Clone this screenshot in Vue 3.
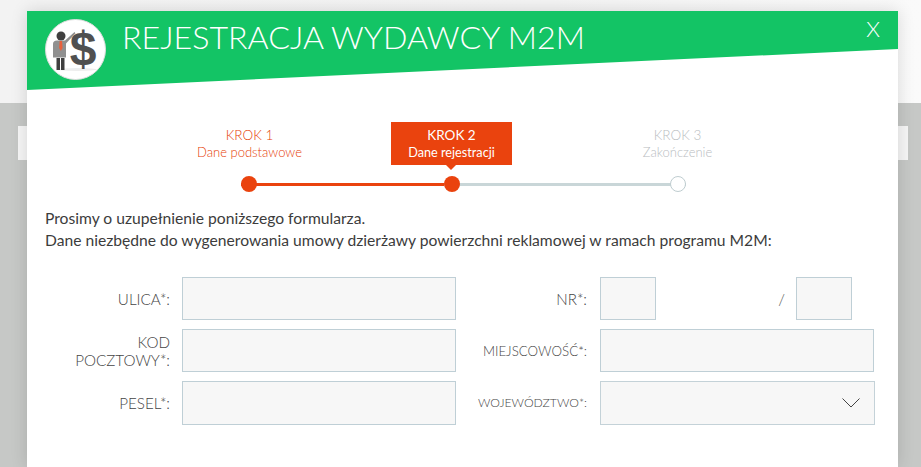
<script setup>
const steps = [
  { id: 1, title: 'KROK 1', sub: 'Dane podstawowe', state: 'done' },
  { id: 2, title: 'KROK 2', sub: 'Dane rejestracji', state: 'active' },
  { id: 3, title: 'KROK 3', sub: 'Zakończenie', state: 'todo' }
]
</script>

<template>
  <div class="backdrop">
    <div class="band"></div>
    <div class="under">
      <div class="strip"></div>
      <div class="strip"></div>
    </div>
  </div>

  <section class="modal">
    <header class="head">
      <div class="logo">
        <svg viewBox="0 0 61 61" width="61" height="61">
          <circle cx="30.5" cy="30.5" r="30" fill="#fff" stroke="#dcdcdc" stroke-width="1" />
          <ellipse cx="32" cy="50.500" rx="20" ry="1.500" fill="#eeeeee" />
          <circle cx="16" cy="17" r="4.500" fill="#3f3f3f" />
          <path d="M8 25q0-3.500 4-3.500h8l9.500-8.500 1 1.200-9.500 10.300v14H8z" fill="#909090" />
          <path d="M11.500 39h3.500v12h-3.500zM16 39h3.500v12H16z" fill="#3f3f3f" />
          <path d="M14.700 22h2.300l.6 7-1.700 3-1.800-3z" fill="#e8603c" />
          <text x="38" y="46" class="dollar">$</text>
        </svg>
      </div>
      <h1 class="title">REJESTRACJA WYDAWCY M2M</h1>
      <span class="close">X</span>
    </header>

    <div class="steps">
      <div v-for="s in steps" :key="s.id" class="step" :class="s.state">
        <div class="step-title">{{ s.title }}</div>
        <div class="step-sub">{{ s.sub }}</div>
      </div>
    </div>

    <div class="track">
      <span class="dot on"></span>
      <span class="dot on"></span>
      <span class="dot off"></span>
    </div>

    <p class="intro">
      Prosimy o uzupełnienie poniższego formularza.<br />
      Dane niezbędne do wygenerowania umowy dzierżawy powierzchni reklamowej w ramach programu M2M:
    </p>

    <form class="form" @submit.prevent>
      <label class="lab">ULICA*:</label>
      <input class="field" type="text" />
      <label class="lab right">NR*:</label>
      <div class="nr">
        <input class="field small" type="text" />
        <span class="slash">/</span>
        <input class="field small" type="text" />
      </div>

      <label class="lab">KOD<br />POCZTOWY*:</label>
      <input class="field" type="text" />
      <label class="lab right mid">MIEJSCOWOŚĆ*:</label>
      <input class="field town" type="text" />

      <label class="lab">PESEL*:</label>
      <input class="field" type="text" />
      <label class="lab right tiny">WOJEWÓDZTWO*:</label>
      <div class="select">
        <svg width="18" height="10" viewBox="0 0 18 10">
          <path d="M.5.500 9 9 17.500.500" fill="none" stroke="#444" stroke-width="1" />
        </svg>
      </div>
    </form>
  </section>
</template>

<style scoped>
.backdrop {
  height: 467px;
  display: flex;
  flex-direction: column;
}
.band {
  height: 103px;
  background: linear-gradient(90deg, #f3f3f3 0, #f4f4f4 60%, #fafafa 100%);
}
.under {
  flex: 1;
  background: #c6c8c6;
  padding: 23px 13px 0 18px;
  display: flex;
  justify-content: space-between;
  align-items: flex-start;
}
.strip {
  width: 40px;
  height: 34px;
  background: #f6f6f6;
}
.modal {
  position: absolute;
  top: 11px;
  left: 27px;
  width: 871px;
  height: 456px;
  background: #fff;
  box-shadow: 0 0 16px rgba(0, 0, 0, 0.14);
  font-family: Lato, "Liberation Sans", sans-serif;
  color: #444;
  overflow: hidden;
}
.head {
  height: 79px;
  background: #13c465;
  clip-path: polygon(0 0, 100% 0, 100% 38px, 0 79px);
  display: flex;
  align-items: flex-start;
  padding: 8px 18px 0 18px;
  box-sizing: border-box;
}
.logo {
  width: 61px;
  height: 61px;
  flex: none;
}
.dollar {
  font-family: "Liberation Sans", sans-serif;
  font-weight: 700;
  font-size: 48px;
  fill: #505050;
  text-anchor: middle;
}
.title {
  margin: 0 0 0 16px;
  font-size: 32.200px;
  font-weight: 300;
  line-height: 36px;
  color: #fff;
  white-space: nowrap;
  flex: 1;
}
.close {
  font-size: 22px;
  font-weight: 300;
  color: #fff;
  line-height: 20px;
}
.steps {
  display: flex;
  margin: 32px 0 0 162px;
  height: 43px;
}
.step {
  position: relative;
  width: 121px;
  box-sizing: border-box;
  text-align: center;
  padding-top: 5px;
  font-size: 13px;
  line-height: 17px;
  font-weight: 300;
  margin-right: 81px;
}
.step:nth-child(2) {
  margin-right: 105px;
}
.step-title {
  font-size: 13.500px;
}
.step.done {
  color: #e63c05;
}
.step.active {
  background: #ea430e;
  color: #fff;
  font-weight: 400;
}
.step.active .step-sub {
  font-size: 12.700px;
}
.step.active::after {
  content: "";
  position: absolute;
  left: 55px;
  top: 43px;
  border: 5px solid transparent;
  border-top-color: #ea430e;
  border-bottom: 0;
}
.step.todo {
  color: #b9bdbf;
}
.track {
  margin: 11px 0 0 214px;
  width: 445px;
  height: 16px;
  display: flex;
  background:
    linear-gradient(#ea430e, #ea430e) 0 6.500px / 203px 3px no-repeat,
    linear-gradient(#c9d6d8, #c9d6d8) 203px 6.500px / 242px 3px no-repeat;
}
.dot {
  width: 16px;
  height: 16px;
  border-radius: 50%;
  box-sizing: border-box;
  flex: none;
}
.dot.on {
  background: #ea430e;
  margin-right: 187px;
}
.dot.on:nth-child(2) {
  margin-right: 210px;
}
.dot.off {
  background: #fff;
  border: 1px solid #bfcdd0;
}
.intro {
  margin: 15px 0 0 18px;
  font-size: 15.650px;
  line-height: 22px;
  color: #3c3c3c;
  white-space: nowrap;
}
.form {
  margin-top: 26px;
  display: grid;
  grid-template-columns: 155px 274px 144px 275px;
  grid-template-rows: 43px 43px 44px;
  row-gap: 9px;
  align-items: center;
}
.lab {
  padding-right: 12px;
  text-align: right;
  font-size: 15.200px;
  line-height: 18px;
  font-weight: 300;
  color: #444;
}
.lab.right {
  padding-right: 13px;
}
.lab.mid {
  font-size: 13.300px;
}
.lab.tiny {
  font-size: 12.200px;
  white-space: nowrap;
}
.field {
  display: block;
  box-sizing: border-box;
  width: 100%;
  height: 100%;
  margin: 0;
  padding: 0 8px;
  background: #f7f7f7;
  border: 1px solid #bfcfd6;
  border-radius: 0;
  outline: none;
}
.town {
  width: 274px;
}
.nr {
  display: flex;
  align-items: center;
  height: 100%;
  width: 252px;
}
.small {
  width: 56px;
  flex: none;
}
.slash {
  margin-left: auto;
  margin-right: 11px;
  font-size: 15.500px;
  font-weight: 300;
  color: #555;
}
.select {
  box-sizing: border-box;
  height: 100%;
  background: #f7f7f7;
  border: 1px solid #c4d2d8;
  display: flex;
  align-items: center;
  justify-content: flex-end;
  padding: 0 14px 0 0;
}
</style>

<style>
body {
  background: #c6c8c6;
}
</style>
